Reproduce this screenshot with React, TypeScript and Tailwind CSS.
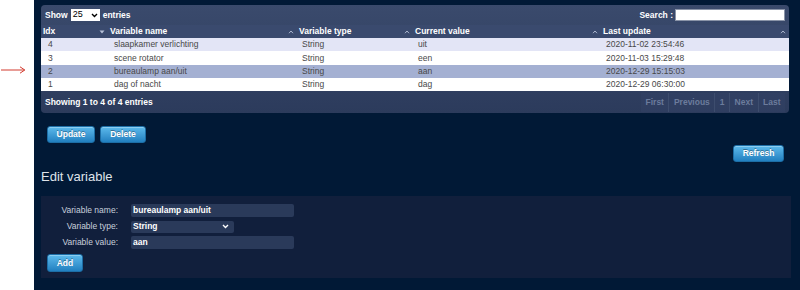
import React from 'react';

const rows = [
  { idx: '4', name: 'slaapkamer verlichting', type: 'String', value: 'uit', updated: '2020-11-02 23:54:46', bg: 'bg-[#e3e5f6]' },
  { idx: '3', name: 'scene rotator', type: 'String', value: 'een', updated: '2020-11-03 15:29:48', bg: 'bg-white' },
  { idx: '2', name: 'bureaulamp aan/uit', type: 'String', value: 'aan', updated: '2020-12-29 15:15:03', bg: 'bg-[#a4b0d2]' },
  { idx: '1', name: 'dag of nacht', type: 'String', value: 'dag', updated: '2020-12-29 06:30:00', bg: 'bg-white' },
];

const columns = [
  { label: 'Idx', w: 'w-[67px]', down: true },
  { label: 'Variable name', w: 'w-[189px]' },
  { label: 'Variable type', w: 'w-[116px]' },
  { label: 'Current value', w: 'w-[188px]' },
  { label: 'Last update', w: 'flex-1' },
];

const Caret = ({ down }: { down?: boolean }) => (
  <svg width="6" height="4" viewBox="0 0 6 4" className="mr-[3px]">
    {down ? (
      <path d="M0.5 0.5 L5.5 0.5 L3 3.5 Z" fill="#b8c2d8" />
    ) : (
      <path d="M1 3.2 L3 1 L5 3.2" fill="none" stroke="#b8c2d8" strokeWidth="0.9" />
    )}
  </svg>
);

const Btn = ({ children, className = '' }: { children: React.ReactNode; className?: string }) => (
  <button
    className={`h-[17px] rounded-[3px] border border-[#1d6ea6] bg-gradient-to-b from-[#5cbaec] to-[#2180c0] text-[8.5px] font-bold text-white [text-shadow:0_-1px_0_rgba(0,0,0,0.35)] shadow-[inset_0_1px_0_rgba(255,255,255,0.3)] ${className}`}
  >
    {children}
  </button>
);

const Chevron = () => (
  <svg width="7" height="5" viewBox="0 0 7 5">
    <path d="M1 1 L3.5 3.5 L6 1" fill="none" stroke="currentColor" strokeWidth="1.4" />
  </svg>
);

export default function App() {
  return (
    <div className="flex h-[290px] w-[800px] font-['Liberation_Sans',Arial,sans-serif]">
      {/* margin with annotation arrow */}
      <div className="w-[34px] bg-white pl-[1px] pt-[66px]">
        <svg width="25" height="8" viewBox="0 0 25 8">
          <path d="M0 4 L23.5 4" stroke="#d23a2e" strokeWidth="1" />
          <path d="M19 0.8 L23.8 4 L19 7.2" fill="none" stroke="#d23a2e" strokeWidth="1" />
        </svg>
      </div>
      <div className="flex-1 bg-[#011936] pl-[7px] pt-[5px]">
        {/* table panel */}
        <div className="w-[748px] overflow-hidden rounded-[4px] bg-gradient-to-b from-[#3a4a6c] to-[#2c3b5c]">
          <div className="flex h-[20px] items-center justify-between px-[4px] text-[8.5px] font-bold text-white">
            <div className="flex items-center">
              <span>Show</span>
              <div className="ml-[3px] flex h-[12px] w-[29px] items-center justify-between bg-white px-[2px] font-normal text-black">
                <span className="text-[9px]">25</span>
                <Chevron />
              </div>
              <span className="ml-[3px]">entries</span>
            </div>
            <div className="flex items-center">
              <span>Search :</span>
              <div className="ml-[2px] h-[12px] w-[110px] border border-[#8a94a8] bg-white" />
            </div>
          </div>
          <div className="flex h-[13px] items-center bg-[#3a4a6e] text-[8.5px] font-bold text-white">
            {columns.map((c) => (
              <div key={c.label} className={`${c.w} flex items-center justify-between pl-[2px]`}>
                <span>{c.label}</span>
                <Caret down={c.down} />
              </div>
            ))}
          </div>
          {rows.map((r) => (
            <div key={r.idx} className={`flex h-[13.3px] items-center text-[8.5px] text-[#484848] ${r.bg}`}>
              <div className="w-[67px] pl-[7px]">{r.idx}</div>
              <div className="w-[189px] pl-[6px]">{r.name}</div>
              <div className="w-[116px] pl-[5px]">{r.type}</div>
              <div className="w-[188px] pl-[5px]">{r.value}</div>
              <div className="flex-1 pl-[5px]">{r.updated}</div>
            </div>
          ))}
          <div className="flex h-[22px] items-center justify-between pl-[4px] pr-[4px] text-[8.5px] font-bold">
            <span className="text-white">Showing 1 to 4 of 4 entries</span>
            <div className="flex items-center text-[#6c7c9c]">
              {['First', 'Previous', '1', 'Next', 'Last'].map((p) => (
                <span key={p} className="border-l border-[#3d4d6e] bg-[#34446a]/40 px-[4.5px] py-[3px] first:border-l-0">
                  {p}
                </span>
              ))}
            </div>
          </div>
        </div>

        {/* action buttons */}
        <div className="mt-[13px] flex gap-[5px] pl-[6px]">
          <Btn className="w-[48px]">Update</Btn>
          <Btn className="w-[46px]">Delete</Btn>
        </div>
        <div className="mt-[2px] flex w-[748px] justify-end pr-[5px]">
          <Btn className="w-[51px]">Refresh</Btn>
        </div>

        <h2 className="mt-[7px] text-[13px] leading-[16px] text-[#dfe3ea]">Edit variable</h2>

        {/* edit form */}
        <div className="mt-[11px] h-[82px] w-[750px] bg-[#111f3c] pl-[6px] pt-[8px]">
          <div className="grid grid-cols-[71px_auto] items-center gap-x-[13px] gap-y-[3px]">
            <span className="text-right text-[8.5px] text-[#c9d0dc]">Variable name:</span>
            <div className="flex h-[13px] w-[163px] items-center rounded-[2px] bg-[#2a3a5a] px-[2px] text-[8.5px] font-bold text-white">
              bureaulamp aan/uit
            </div>
            <span className="text-right text-[8.5px] text-[#c9d0dc]">Variable type:</span>
            <div className="flex h-[12px] w-[103px] items-center justify-between rounded-[2px] bg-[#2a3a5a] px-[2px] text-[8.5px] font-bold text-white">
              <span>String</span>
              <span className="mr-[3px]"><Chevron /></span>
            </div>
            <span className="text-right text-[8.5px] text-[#c9d0dc]">Variable value:</span>
            <div className="flex h-[13px] w-[163px] items-center rounded-[2px] bg-[#2a3a5a] px-[2px] text-[8.5px] font-bold text-white">
              aan
            </div>
          </div>
          <Btn className="mt-[3px] h-[18px] w-[36px]">Add</Btn>
        </div>
      </div>
    </div>
  );
}
